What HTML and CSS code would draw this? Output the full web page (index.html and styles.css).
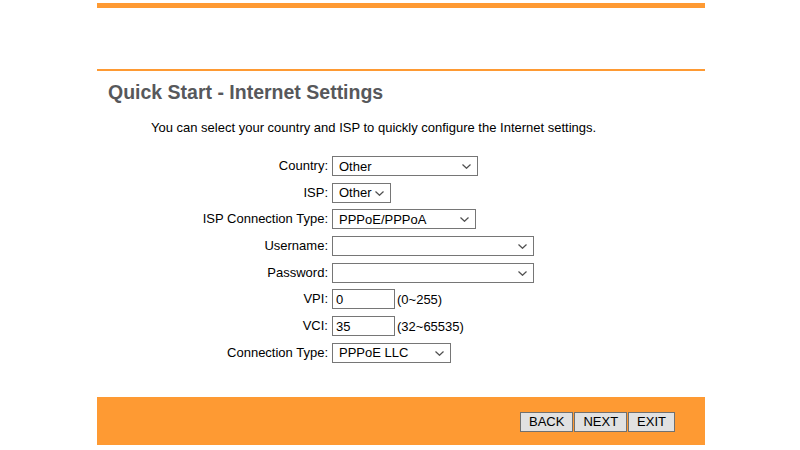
FILE: index.html
```
<!DOCTYPE html>
<html lang="en">
<head>
<meta charset="utf-8">
<title>Quick Start - Internet Settings</title>
<link rel="stylesheet" href="styles.css">
</head>
<body>
<div class="page">
    <div class="topbar"></div>
    <div class="header"></div>
    <div class="rule"></div>

    <h1 class="title">Quick Start - Internet Settings</h1>
    <p class="intro">You can select your country and ISP to quickly configure the Internet settings.</p>

    <form class="setup">
        <label for="country">Country:</label>
        <div class="field">
            <span class="dropdown w-country">
                <select id="country"><option>Other</option></select>
                <svg class="chev" width="9" height="5" viewBox="0 0 9 5"><path d="M0.5 0.5 L4.5 4.3 L8.5 0.5"/></svg>
            </span>
        </div>

        <label for="isp">ISP:</label>
        <div class="field">
            <span class="dropdown w-isp">
                <select id="isp"><option>Other</option></select>
                <svg class="chev" width="9" height="5" viewBox="0 0 9 5"><path d="M0.5 0.5 L4.5 4.3 L8.5 0.5"/></svg>
            </span>
        </div>

        <label for="conntype">ISP Connection Type:</label>
        <div class="field">
            <span class="dropdown w-conntype">
                <select id="conntype"><option>PPPoE/PPPoA</option></select>
                <svg class="chev" width="9" height="5" viewBox="0 0 9 5"><path d="M0.5 0.5 L4.5 4.3 L8.5 0.5"/></svg>
            </span>
        </div>

        <label for="user">Username:</label>
        <div class="field">
            <span class="dropdown w-wide">
                <select id="user"><option></option></select>
                <svg class="chev" width="9" height="5" viewBox="0 0 9 5"><path d="M0.5 0.5 L4.5 4.3 L8.5 0.5"/></svg>
            </span>
        </div>

        <label for="pass">Password:</label>
        <div class="field">
            <span class="dropdown w-wide">
                <select id="pass"><option></option></select>
                <svg class="chev" width="9" height="5" viewBox="0 0 9 5"><path d="M0.5 0.5 L4.5 4.3 L8.5 0.5"/></svg>
            </span>
        </div>

        <label for="vpi">VPI:</label>
        <div class="field">
            <input id="vpi" type="text" class="num" value="0"><span class="hint">(0~255)</span>
        </div>

        <label for="vci">VCI:</label>
        <div class="field">
            <input id="vci" type="text" class="num" value="35"><span class="hint">(32~65535)</span>
        </div>

        <label for="encap">Connection Type:</label>
        <div class="field">
            <span class="dropdown w-encap">
                <select id="encap"><option>PPPoE LLC</option></select>
                <svg class="chev" width="9" height="5" viewBox="0 0 9 5"><path d="M0.5 0.5 L4.5 4.3 L8.5 0.5"/></svg>
            </span>
        </div>
    </form>

    <div class="footer">
        <button type="button" class="btn">BACK</button>
        <button type="button" class="btn">NEXT</button>
        <button type="button" class="btn">EXIT</button>
    </div>
</div>
</body>
</html>
```

FILE: styles.css
```
body{
    margin: 0;
    padding-left: 2px;
    background-color: #ffffff;
    font-family: "Liberation Sans", Arial, sans-serif;
    font-size: 13px;
    color: #000000;
}

.page{
    width: 608px;
    margin: 0 auto;
    padding-top: 3px;
}

.topbar{
    height: 5px;
    background-color: #fe9a33;
}
.header{
    height: 61px;
}
.rule{
    height: 2px;
    background-color: #fe9a33;
}

.title{
    margin: 11px 0 0 0;
    padding-left: 11px;
    font-size: 19.5px;
    line-height: 20px;
    font-weight: bold;
    color: #57585b;
}

.intro{
    margin: 18px 0 0 0;
    padding-left: 54px;
    line-height: 16px;
}

.setup{
    display: grid;
    grid-template-columns: 231px 1fr;
    column-gap: 4px;
    row-gap: 6.7px;
    margin-top: 20px;
}
.setup label{
    text-align: right;
    line-height: 20px;
}
.field{
    display: flex;
    align-items: center;
    height: 20px;
}

select, input{
    box-sizing: border-box;
    height: 20px;
    margin: 0;
    font-family: "Liberation Sans", Arial, sans-serif;
    font-size: 13px;
    color: #000000;
    background-color: #ffffff;
    border: 1px solid #767676;
    border-radius: 0;
    outline: none;
}

.dropdown{
    position: relative;
    display: inline-block;
    height: 20px;
}
.dropdown select{
    -webkit-appearance: none;
    appearance: none;
    width: 100%;
    padding: 0 14px 0 6px;
}
.chev{
    position: absolute;
    right: 7px;
    top: 8px;
    pointer-events: none;
}
.chev path{
    fill: none;
    stroke: #505050;
    stroke-width: 1.2;
}

.w-country{ width: 146px; }
.w-isp{ width: 59px; }
.w-conntype{ width: 144px; }
.w-wide{ width: 202px; }
.w-encap{ width: 119px; }

.num{
    width: 63px;
    padding: 0 3px;
}
.hint{
    margin-left: 2px;
}

.footer{
    display: flex;
    justify-content: flex-end;
    gap: 1px;
    height: 48px;
    margin-top: 34px;
    padding: 15px 30px 0 0;
    box-sizing: border-box;
    background-color: #fe9a33;
}
.btn{
    height: 20px;
    padding: 0 8px;
    font-family: "Liberation Sans", Arial, sans-serif;
    font-size: 13px;
    color: #000000;
    background-color: #e1e1e1;
    border: 1px solid #707070;
    border-radius: 0;
}
```
